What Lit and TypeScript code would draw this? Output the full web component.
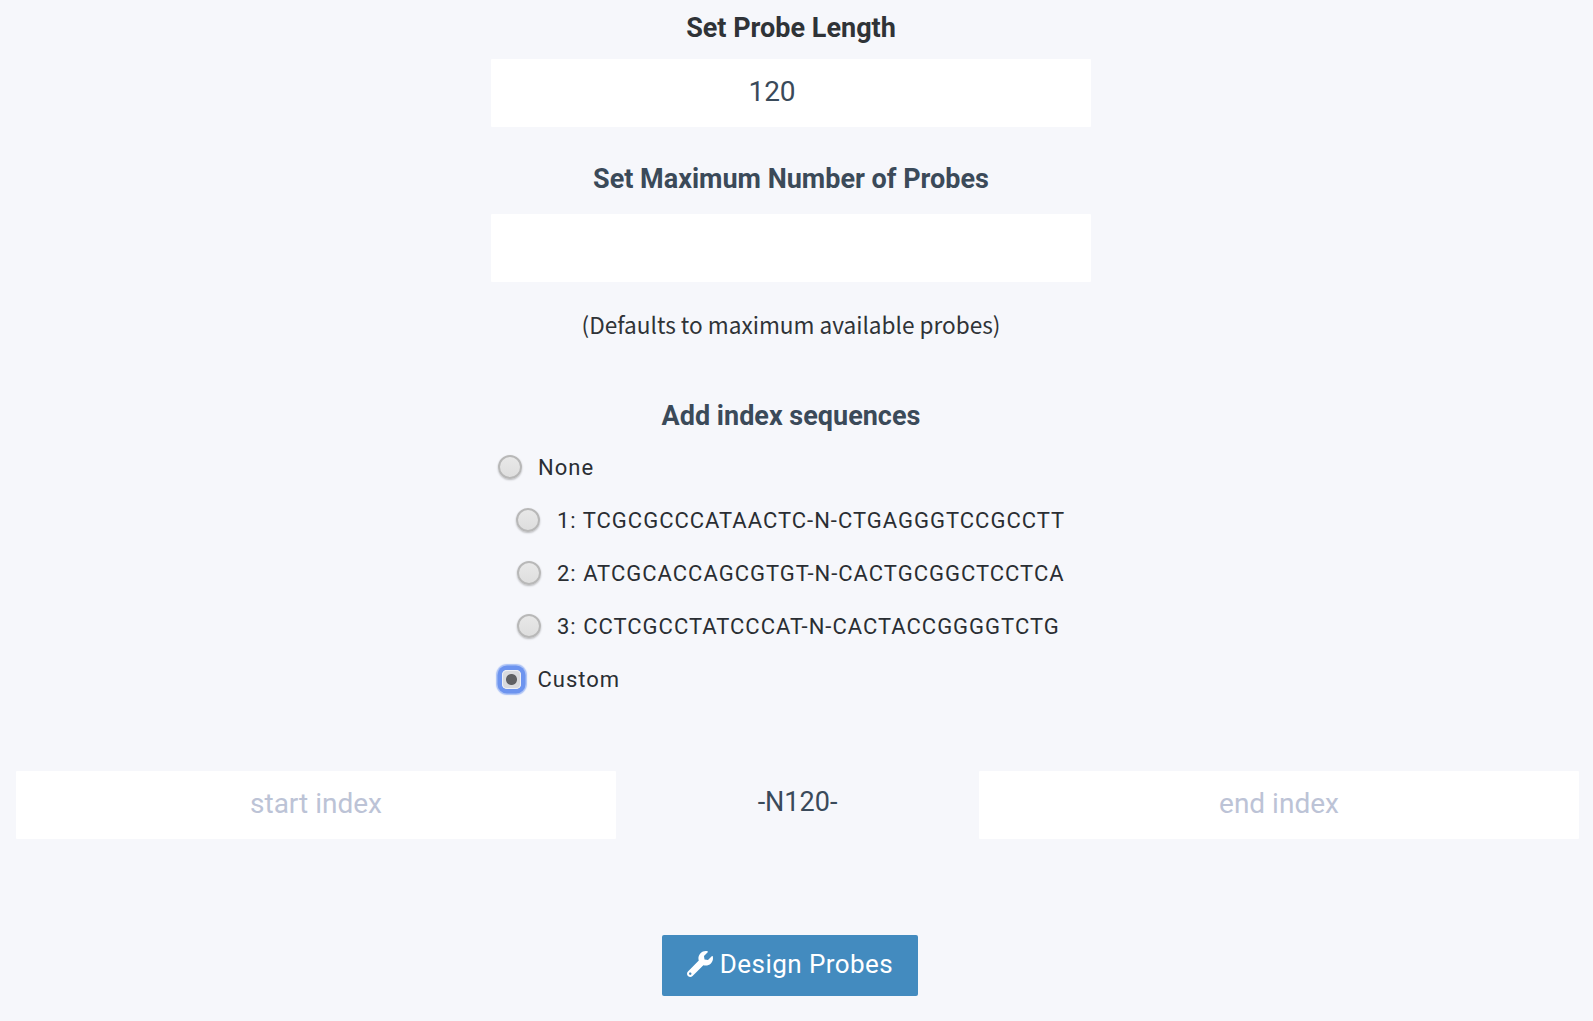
import { LitElement, html, css } from "lit";
import { customElement } from "lit/decorators.js";

const rows = [
  { label: "None", cls: "" },
  { label: "1: TCGCGCCCATAACTC-N-CTGAGGGTCCGCCTT", cls: "indent" },
  { label: "2: ATCGCACCAGCGTGT-N-CACTGCGGCTCCTCA", cls: "indent far" },
  { label: "3: CCTCGCCTATCCCAT-N-CACTACCGGGGTCTG", cls: "indent far" },
  { label: "Custom", cls: "" },
];

@customElement("app-root")
export class AppRoot extends LitElement {
  static styles = css`
    :host { display: block; min-height: 1021px; background: #f6f7fb; font-family: Roboto, sans-serif; color: #3a4a5a; box-sizing: border-box; overflow: hidden; }
    .col { width: 600px; margin-left: 491px; display: flex; flex-direction: column; align-items: stretch; }
    h3 { margin: 0; font-size: 27px; line-height: 32px; font-weight: 700; text-align: center; color: #3b4a59; }
    h3.first { color: #2f3337; margin-top: 12px; }
    .box { box-sizing: border-box; display: block; width: 100%; height: 68px; border: 0; outline: 0; background: #fff; border-radius: 1px; font-family: Roboto, sans-serif; font-size: 28px; color: #3a4a5a; padding: 0 0 4px 0; text-align: center; }
    .box.val { padding-right: 38px; }
    .box::placeholder { color: #bcc3d6; opacity: 1; }
    .mt1 { margin-top: 15px; }
    .mt2 { margin-top: 19px; }
    .h2 { margin-top: 36px; }
    .note { margin-top: 26px; text-align: center; font-family: "Noto Sans CJK SC", "Noto Sans", sans-serif; font-size: 22.6px; line-height: 34px; color: #2f3337; }
    .h3 { margin-top: 58px; }
    .radios { margin-top: 9px; display: flex; flex-direction: column; }
    label { display: flex; align-items: center; height: 53px; font-size: 22px; letter-spacing: 1px; color: #2a2e33; margin-left: 7px; }
    label.indent { margin-left: 25px; }
    label.far { margin-left: 26px; }
    input[type="radio"] { appearance: none; -webkit-appearance: none; box-sizing: border-box; margin: 0 16px 2px 0; width: 24px; height: 24px; flex: none; border-radius: 50%; background: linear-gradient(#e8e8e8, #dedede); border: 2px solid #b8b8b8; box-shadow: 0 1px 2px rgba(0, 0, 0, 0.25); }
    label.indent input { margin-right: 17px; }
    label.far input { margin-right: 16px; }
    input[type="radio"]:checked { border: 0; border-radius: 5px; margin: 0 16.5px 0 4px; width: 19px; height: 19px; background: radial-gradient(circle at center, #5f6064 0 5px, #d9dade 6px); box-shadow: 0 0 0 1px #eef0f6 inset, 0 0 0 4.5px #6d94ef, 0 0 1px 6px #a9c0f5; }
    .pair { margin-top: 65px; padding: 0 14px 0 16px; display: grid; grid-template-columns: 600px 1fr 600px; align-items: center; }
    .n { text-align: center; font-size: 27px; color: #3a4a5a; padding-bottom: 6px; }
    .btnwrap { margin-top: 96px; width: 256px; margin-left: 662px; }
    button { box-sizing: border-box; width: 256px; height: 61px; border: 0; border-radius: 2px; background: #438bbf; color: #fff; font-family: Roboto, sans-serif; font-size: 26px; display: flex; align-items: center; justify-content: center; gap: 7px; padding: 0 0 4px 0; letter-spacing: 0.45px; }
    button svg { width: 26px; height: 26px; fill: #fff; flex: none; }
  `;

  render() {
    return html`
      <div class="col">
        <h3 class="first">Set Probe Length</h3>
        <input class="box val mt1" value="120" aria-label="Probe length" />
        <h3 class="h2">Set Maximum Number of Probes</h3>
        <input class="box mt2" aria-label="Maximum number of probes" />
        <div class="note">(Defaults to maximum available probes)</div>
        <h3 class="h3">Add index sequences</h3>
        <div class="radios">
          ${rows.map(
            (r) => html`<label class=${r.cls}>
              <input type="radio" name="idx" ?checked=${r.label === "Custom"} />${r.label}
            </label>`
          )}
        </div>
      </div>
      <div class="pair">
        <input class="box" placeholder="start index" aria-label="Start index" />
        <div class="n">-N120-</div>
        <input class="box" placeholder="end index" aria-label="End index" />
      </div>
      <div class="btnwrap">
        <button>
          <svg viewBox="0 0 512 512"><path d="M507.73 109.1c-2.24-9.03-13.54-12.09-20.12-5.51l-74.36 74.36-67.88-11.31-11.31-67.88 74.36-74.36c6.62-6.62 3.43-17.9-5.66-20.16-47.38-11.74-99.55.91-136.58 37.93-39.64 39.64-50.55 97.1-34.05 147.2L18.74 402.76c-24.99 24.99-24.99 65.51 0 90.5 24.99 24.99 65.51 24.99 90.5 0l213.21-213.21c50.12 16.71 107.47 5.68 147.37-34.22 37.07-37.07 49.7-89.32 37.91-136.73zM64 472c-13.25 0-24-10.75-24-24 0-13.26 10.75-24 24-24s24 10.74 24 24c0 13.25-10.75 24-24 24z"/></svg>
          Design Probes
        </button>
      </div>
    `;
  }
}
